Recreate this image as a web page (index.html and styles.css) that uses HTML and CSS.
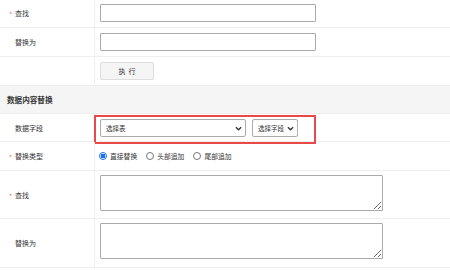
FILE: index.html
```html
<!DOCTYPE html>
<html lang="zh">
<head>
  <meta charset="UTF-8" />
  <title>数据内容替换</title>
  <link rel="stylesheet" href="styles.css">
</head>
<body>
  <div class="page">
    <div class="row">
      <div class="label"><span class="req">*</span>查找</div>
      <div class="field"><input type="text" class="txt" /></div>
    </div>
    <div class="row">
      <div class="label">替换为</div>
      <div class="field"><input type="text" class="txt" /></div>
    </div>
    <div class="row">
      <div class="label"></div>
      <div class="field"><button class="btn">执&nbsp;&nbsp;行</button></div>
    </div>

    <div class="section-title">数据内容替换</div>

    <div class="row row-select">
      <div class="label">数据字段</div>
      <div class="field">
        <div class="sel sel-table">
          <select><option>选择表</option></select>
          <svg class="chev" viewBox="0 0 8 5" width="7" height="5"><path d="M1 1l3 3 3-3" fill="none" stroke="#333" stroke-width="1.5"/></svg>
        </div>
        <div class="sel sel-field">
          <select><option>选择字段</option></select>
          <svg class="chev" viewBox="0 0 8 5" width="7" height="5"><path d="M1 1l3 3 3-3" fill="none" stroke="#333" stroke-width="1.5"/></svg>
        </div>
      </div>
      <div class="mark"></div>
    </div>
    <div class="row">
      <div class="label"><span class="req">*</span>替换类型</div>
      <div class="field radios">
        <label><input type="radio" name="t" checked />直接替换</label>
        <label><input type="radio" name="t" />头部追加</label>
        <label><input type="radio" name="t" />尾部追加</label>
      </div>
    </div>
    <div class="row row-area">
      <div class="label"><span class="req">*</span>查找</div>
      <div class="field"><textarea class="area"></textarea></div>
    </div>
    <div class="row row-area row-last">
      <div class="label">替换为</div>
      <div class="field"><textarea class="area"></textarea></div>
    </div>
  </div>
</body>
</html>
```

FILE: styles.css
```css
body {
  margin: 0;
  font-family: "Noto Sans CJK SC", "Noto Sans", sans-serif;
  color: #333;
  background: #fff;
}
.page {
  margin-top: -1px;
}
.row {
  display: grid;
  grid-template-columns: 95px 1fr;
  height: 28px;
  border-bottom: 1px solid #eee;
  position: relative;
}
.label {
  border-right: 1px solid #eee;
  display: flex;
  align-items: center;
  padding-left: 15px;
  font-size: 7px;
  color: #333;
  position: relative;
}
.req {
  color: #f56c6c;
  position: absolute;
  left: 9px;
  top: 50%;
  transform: translateY(-45%);
  font-size: 7px;
}
.field {
  display: flex;
  align-items: center;
  gap: 6px;
  padding-left: 5px;
  min-height: 0;
}
.txt {
  display: block;
  box-sizing: border-box;
  width: 216px;
  height: 18px;
  margin: 0;
  border: 1px solid #aaa;
  border-radius: 1px;
  padding: 0 4px;
}
.btn {
  display: block;
  box-sizing: border-box;
  width: 54px;
  height: 18px;
  margin: 0;
  border: 1px solid #ddd;
  border-radius: 2px;
  background: #f5f5f5;
  font-family: inherit;
  font-size: 7px;
  color: #333;
  padding: 0;
}
.section-title {
  height: 27px;
  background: #f5f5f5;
  border-bottom: 1px solid #eee;
  display: flex;
  align-items: center;
  padding-left: 7px;
  font-size: 7.6px;
  font-weight: bold;
  color: #333;
}
.row-select {
  height: 27px;
}
.sel {
  position: relative;
  height: 18px;
}
.sel select {
  display: block;
  appearance: none;
  box-sizing: border-box;
  height: 18px;
  margin: 0;
  border: 1px solid #aaa;
  border-radius: 2px;
  background: #fff;
  font-family: inherit;
  font-size: 6.5px;
  line-height: 16px;
  color: #333;
  padding: 0 0 0 5px;
}
.sel-table select {
  width: 146px;
}
.sel-field select {
  width: 46px;
}
.chev {
  position: absolute;
  right: 4px;
  top: 7px;
}
.mark {
  position: absolute;
  left: 94px;
  top: 1px;
  width: 222px;
  height: 29px;
  box-sizing: border-box;
  border: 2px solid #e84a4a;
}
.radios {
  gap: 9px;
  font-size: 6.8px;
  color: #333;
  padding-left: 4px;
}
.radios label {
  display: flex;
  align-items: center;
  gap: 3px;
}
.radios input {
  appearance: none;
  box-sizing: border-box;
  width: 8px;
  height: 8px;
  margin: 0;
  border: 1px solid #767676;
  border-radius: 50%;
  background: #fff;
}
.radios input:checked {
  border: 1px solid #1a73e8;
  background: radial-gradient(circle, #1a73e8 0 2.2px, #fff 2.6px);
}
.row-area {
  height: 47px;
}
.row-area .field {
  align-items: flex-start;
  padding-top: 4px;
}
.row-last {
  height: 48px;
}
.area {
  display: block;
  box-sizing: border-box;
  width: 283px;
  height: 36px;
  margin: 0;
  border: 1px solid #aaa;
  border-radius: 1px;
}
```
